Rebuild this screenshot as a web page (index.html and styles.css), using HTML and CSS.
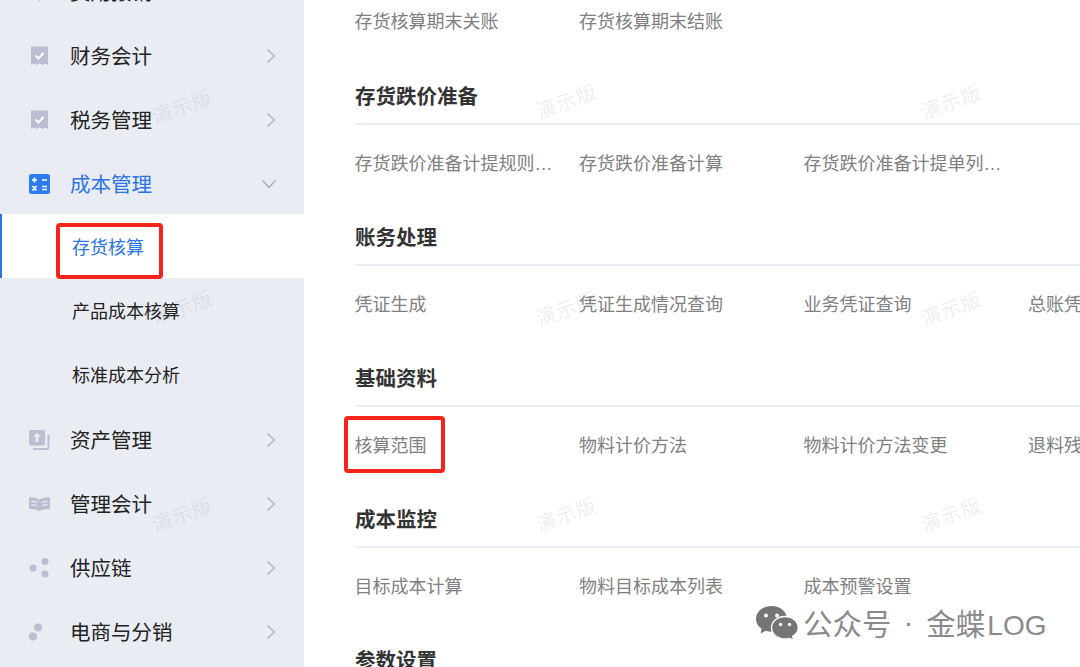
FILE: index.html
```html
<!DOCTYPE html>
<html lang="en">
<head>
    <meta charset="UTF-8">
    <meta name="viewport" content="width=device-width, initial-scale=1.0">
    <title>成本管理</title>
    <link rel="stylesheet" href="styles.css">
</head>
<body>
    <div class="page">
        <!-- Left menu -->
        <nav class="sidebar">
            <a class="nav-item">
                <svg class="nav-icon" viewBox="0 0 21 20"><path d="M6 15H15L10.500 20Z" fill="#c9cddb"/></svg>
                <span>费用报销</span>
                <svg class="chevron" viewBox="0 0 10 16"><path d="M1.5 1.5 8.5 8 1.5 14.5"/></svg>
            </a>
            <a class="nav-item">
                <svg class="nav-icon" viewBox="0 0 21 20"><path d="M2 0.5H19V19L16 17.6 13.2 19 10.5 17.6 7.8 19 5 17.6 2 19Z" fill="#b9bfd1"/><path d="M6.5 9.5 9.5 12.5 14.5 7" fill="none" stroke="#fff" stroke-width="2"/></svg>
                <span>财务会计</span>
                <svg class="chevron" viewBox="0 0 10 16"><path d="M1.5 1.5 8.5 8 1.5 14.5"/></svg>
            </a>
            <a class="nav-item">
                <svg class="nav-icon" viewBox="0 0 21 20"><path d="M2 0.5H19V19L16 17.6 13.2 19 10.5 17.6 7.8 19 5 17.6 2 19Z" fill="#b9bfd1"/><path d="M6.5 9.5 9.5 12.5 14.5 7" fill="none" stroke="#fff" stroke-width="2"/></svg>
                <span>税务管理</span>
                <svg class="chevron" viewBox="0 0 10 16"><path d="M1.5 1.5 8.5 8 1.5 14.5"/></svg>
            </a>
            <a class="nav-item open">
                <svg class="nav-icon" viewBox="0 0 21 20">
                    <rect width="21" height="20" rx="2.5" fill="#2b7cf3"/>
                    <path d="M5.5 3.5V8.5M3 6H8M13 6H18M3.5 12 7.5 16.5M7.5 12 3.5 16.5M13 12.5H18M13 15.5H18" stroke="#fff" stroke-width="1.7" fill="none"/>
                </svg>
                <span>成本管理</span>
                <svg class="chevron-down" viewBox="0 0 16 10"><path d="M1.5 1.5 8 8.5 14.5 1.5"/></svg>
            </a>
            <div class="sub-list">
                <a class="sub-item active">存货核算</a>
                <a class="sub-item">产品成本核算</a>
                <a class="sub-item">标准成本分析</a>
            </div>
            <a class="nav-item">
                <svg class="nav-icon" viewBox="0 0 21 20">
                    <rect x="0" y="0" width="16" height="15.5" rx="2" fill="#b9bfd1"/>
                    <path d="M8 2.500 12 7H9.500V12H6.500V7H4Z" fill="#e9ebf4"/>
                    <path d="M19.5 5V17.5Q19.5 19 18 19H4" fill="none" stroke="#b9bfd1" stroke-width="2"/>
                </svg>
                <span>资产管理</span>
                <svg class="chevron" viewBox="0 0 10 16"><path d="M1.5 1.5 8.5 8 1.5 14.5"/></svg>
            </a>
            <a class="nav-item">
                <svg class="nav-icon" viewBox="0 0 21 20">
                    <path d="M0 3.5Q5 2.5 10.5 5.5 16 2.5 21 3.5V15Q16 14.5 10.5 17 5 14.5 0 15Z" fill="#b9bfd1"/>
                    <path d="M2.5 7.5Q5 7 8 8.5M2.5 11Q5 10.5 8 12M18.500 7.500Q16 7 13 8.500M18.500 11Q16 10.500 13 12" stroke="#e9ebf4" stroke-width="1.300" fill="none"/>
                </svg>
                <span>管理会计</span>
                <svg class="chevron" viewBox="0 0 10 16"><path d="M1.5 1.5 8.5 8 1.5 14.5"/></svg>
            </a>
            <a class="nav-item">
                <svg class="nav-icon" viewBox="0 0 21 20">
                    <circle cx="4" cy="10" r="3.500" fill="#b9bfd1"/>
                    <circle cx="16" cy="3.500" r="3.500" fill="#b9bfd1"/>
                    <circle cx="16" cy="16" r="3.500" fill="#b9bfd1"/>
                </svg>
                <span>供应链</span>
                <svg class="chevron" viewBox="0 0 10 16"><path d="M1.5 1.5 8.5 8 1.5 14.5"/></svg>
            </a>
            <a class="nav-item">
                <svg class="nav-icon" viewBox="0 0 21 20">
                    <circle cx="9" cy="5.500" r="4" fill="#b9bfd1"/>
                    <circle cx="4" cy="14.500" r="4" fill="#b9bfd1"/>
                </svg>
                <span>电商与分销</span>
                <svg class="chevron" viewBox="0 0 10 16"><path d="M1.5 1.5 8.5 8 1.5 14.5"/></svg>
            </a>
        </nav>

        <!-- Function list -->
        <main class="content">
            <div class="link-row first-row">
                <a class="link">存货核算期末关账</a>
                <a class="link">存货核算期末结账</a>
            </div>

            <section class="group">
                <h2 class="group-title">存货跌价准备</h2>
                <div class="link-row">
                    <a class="link">存货跌价准备计提规则设置</a>
                    <a class="link">存货跌价准备计算</a>
                    <a class="link">存货跌价准备计提单列表页</a>
                </div>
            </section>

            <section class="group">
                <h2 class="group-title">账务处理</h2>
                <div class="link-row">
                    <a class="link">凭证生成</a>
                    <a class="link">凭证生成情况查询</a>
                    <a class="link">业务凭证查询</a>
                    <a class="link">总账凭证查询</a>
                </div>
            </section>

            <section class="group">
                <h2 class="group-title">基础资料</h2>
                <div class="link-row">
                    <a class="link">核算范围</a>
                    <a class="link">物料计价方法</a>
                    <a class="link">物料计价方法变更</a>
                    <a class="link">退料残值设置</a>
                </div>
            </section>

            <section class="group">
                <h2 class="group-title">成本监控</h2>
                <div class="link-row">
                    <a class="link">目标成本计算</a>
                    <a class="link">物料目标成本列表</a>
                    <a class="link">成本预警设置</a>
                </div>
            </section>

            <section class="group">
                <h2 class="group-title">参数设置</h2>
            </section>
        </main>

        <!-- Demo watermark -->
        <span class="watermark wm-a1">演示版</span>
        <span class="watermark wm-a2">演示版</span>
        <span class="watermark wm-a3">演示版</span>
        <span class="watermark wm-b1">演示版</span>
        <span class="watermark wm-b2">演示版</span>
        <span class="watermark wm-b3">演示版</span>
        <span class="watermark wm-c1">演示版</span>
        <span class="watermark wm-c2">演示版</span>
        <span class="watermark wm-c3">演示版</span>

        <!-- Red marks -->
        <div class="mark mark-menu"></div>
        <div class="mark mark-link"></div>

        <!-- Account badge -->
        <div class="account">
            <svg class="wechat" viewBox="0 0 44 36">
                <path d="M16.500 1C7.600 1 1 6.800 1 14C1 18 3.200 21.400 6.500 23.700L5.500 28.500 10.800 25.800C12.600 26.500 14.500 26.800 16.500 26.800C25.400 26.800 32 21 32 14C32 6.800 25.400 1 16.500 1Z" fill="#757575"/>
                <circle cx="11" cy="10.500" r="2" fill="#fff"/>
                <circle cx="22" cy="10.500" r="2" fill="#fff"/>
                <path d="M30 11.500C22.600 11.500 16.500 16.500 16.500 22.800C16.500 29 22.600 34 30 34C31.500 34 33 33.800 34.300 33.400L38.800 35.500 37.800 31.500C41 29.500 43.300 26.400 43.300 22.800C43.300 16.500 37.400 11.500 30 11.500Z" fill="#757575" stroke="#fff" stroke-width="1.500"/>
                <circle cx="25.500" cy="19.500" r="1.700" fill="#fff"/>
                <circle cx="34.500" cy="19.500" r="1.700" fill="#fff"/>
            </svg>
            <span class="account-name">公众号</span>
            <span class="account-dot">·</span>
            <span class="account-name">金蝶<span class="account-latin">LOG</span></span>
        </div>
    </div>
</body>
</html>
```

FILE: styles.css
```css
/* Page frame */
html, body {
    margin: 0;
    height: 100%;
    overflow: hidden;
    background: #ffffff;
}

.page {
    display: flex;
    position: relative;
    width: 1080px;
    height: 667px;
    overflow: hidden;
    font-family: "Liberation Sans", "Noto Sans CJK SC", sans-serif;
}

/* Left menu */
.sidebar {
    flex: 0 0 304px;
    margin-top: -40px;
    background-color: #eaecf4;
}

.nav-item {
    display: flex;
    align-items: center;
    height: 64px;
    padding: 0 28px 0 29px;
    font-size: 20.5px;
    color: #222222;
}

.nav-item span {
    margin-top: -2px;
}

.nav-item.open {
    color: #2b74e6;
}

.nav-icon {
    flex: 0 0 21px;
    width: 21px;
    height: 20px;
    margin-right: 20px;
}

.chevron, .chevron-down {
    margin-left: auto;
    fill: none;
    stroke: #a8acb8;
    stroke-width: 1.3;
}

.chevron {
    width: 10px;
    height: 16px;
}

.chevron-down {
    width: 16px;
    height: 10px;
    margin-right: -1px;
}

.sub-list {
    margin: -2px 0 2px;
}

.sub-item {
    display: flex;
    align-items: center;
    height: 64px;
    padding-left: 72px;
    font-size: 18px;
    color: #222222;
}

.sub-item.active {
    padding-left: 70px;
    padding-bottom: 1px;
    height: 63px;
    color: #2b74e6;
    background-color: #ffffff;
    border-left: 2px solid #2b74e6;
}

/* Function list */
.content {
    flex: 1;
    min-width: 0;
    padding: 6px 0 0 51px;
}

.group {
    padding-top: 44px;
}

.group-title {
    margin: 0;
    padding-bottom: 12px;
    font-size: 20.5px;
    line-height: 28px;
    font-weight: 700;
    color: #333333;
    border-bottom: 2px solid #eceef5;
}

.link-row {
    display: grid;
    grid-template-columns: repeat(4, 224.5px);
    height: 32px;
    margin-left: -0.5px;
}

.first-row {
    margin-bottom: 1px;
}

.group .link-row {
    margin-top: 23px;
}

.link {
    max-width: 198px;
    overflow: hidden;
    white-space: nowrap;
    text-overflow: ellipsis;
    font-size: 18px;
    line-height: 32px;
    color: #808080;
}

/* Demo watermark */
.watermark {
    position: absolute;
    font-size: 20px;
    line-height: 24px;
    letter-spacing: 1px;
    color: rgba(150, 155, 175, 0.18);
    transform: rotate(-20deg);
}

.wm-a1 { left: 151px; top: 95px; }
.wm-a2 { left: 151px; top: 296px; }
.wm-a3 { left: 151px; top: 503px; }
.wm-b1 { left: 535px; top: 90px; }
.wm-b2 { left: 535px; top: 297px; }
.wm-b3 { left: 535px; top: 503px; }
.wm-c1 { left: 920px; top: 90px; }
.wm-c2 { left: 920px; top: 297px; }
.wm-c3 { left: 920px; top: 503px; }

/* Red marks */
.mark {
    position: absolute;
    box-sizing: border-box;
    border: 4px solid #f5241c;
    border-radius: 4px;
}

.mark-menu {
    left: 56px;
    top: 223px;
    width: 107px;
    height: 56px;
}

.mark-link {
    left: 344px;
    top: 416px;
    width: 101px;
    height: 57px;
}

/* Account badge */
.account {
    position: absolute;
    left: 755px;
    top: 603px;
    display: flex;
    align-items: center;
    height: 40px;
    font-size: 29.5px;
    color: #8a8a8a;
}

.account span {
    margin-top: -2px;
}

.account .account-latin {
    margin-left: 2px;
    font-size: 28px;
}

.wechat {
    width: 44px;
    height: 36px;
    margin-right: 4px;
}

.account-dot {
    margin: 0 13px 0 12px;
}
```
